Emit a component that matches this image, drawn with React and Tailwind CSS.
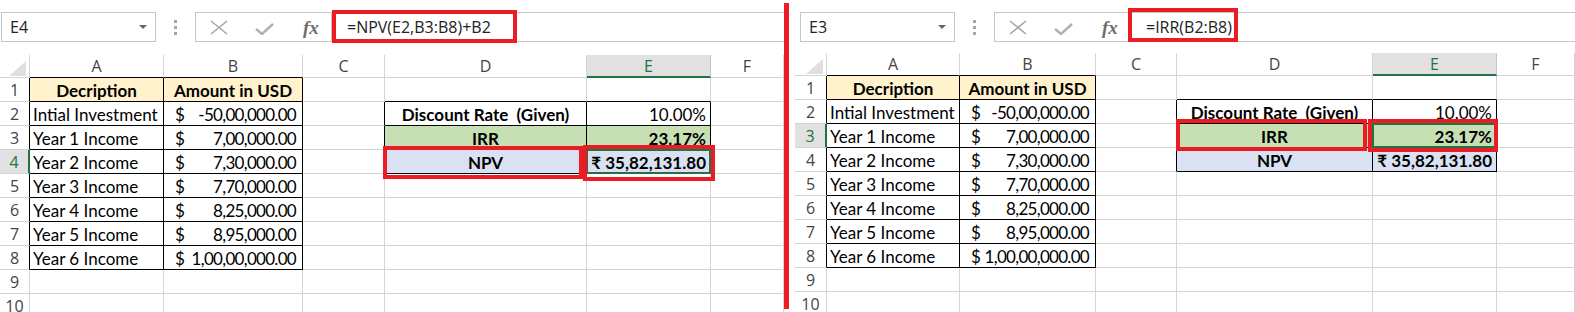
import React from "react";

const cellFont = { fontFamily: "Lato, 'Noto Sans', 'DejaVu Sans', sans-serif" };
const uiFont = { fontFamily: "'Open Sans', 'Noto Sans', sans-serif" };

const cells = {
  A1: { t: "Decription", b: true, align: "center", bg: "bg-[#fff2cc]" },
  B1: { t: "Amount in USD", b: true, align: "center", bg: "bg-[#fff2cc]" },
  A2: { t: "Intial Investment" },
  A3: { t: "Year 1 Income" },
  A4: { t: "Year 2 Income" },
  A5: { t: "Year 3 Income" },
  A6: { t: "Year 4 Income" },
  A7: { t: "Year 5 Income" },
  A8: { t: "Year 6 Income" },
  B2: { usd: "-50,00,000.00" },
  B3: { usd: "7,00,000.00" },
  B4: { usd: "7,30,000.00" },
  B5: { usd: "7,70,000.00" },
  B6: { usd: "8,25,000.00" },
  B7: { usd: "8,95,000.00" },
  B8: { usd: "1,00,00,000.00" },
  D2: { t: "Discount Rate  (Given)", b: true, align: "center" },
  E2: { t: "10.00%", align: "right" },
  D3: { t: "IRR", b: true, align: "center", bg: "bg-[#c6e0b4]" },
  E3: { t: "23.17%", b: true, align: "right", bg: "bg-[#c6e0b4]" },
  D4: { t: "NPV", b: true, align: "center", bg: "bg-[#d9e1f2]" },
  E4: { t: "₹ 35,82,131.80", b: true, align: "right", bg: "bg-[#d9e1f2]" },
};

const letters = ["", "A", "B", "C", "D", "E", "F"];

function inTable(r, c) {
  return (r >= 1 && r <= 8 && c >= 1 && c <= 2) || (r >= 2 && r <= 4 && c >= 4 && c <= 5);
}

function Cell({ r, c, selRow, selCol }) {
  const rb = inTable(r, c) || inTable(r, c + 1) ? "border-r-black" : "border-r-[#d4d4d4]";
  const bb = inTable(r, c) || inTable(r + 1, c) ? "border-b-black" : "border-b-[#d4d4d4]";

  if (c === 0) {
    const sel = r === selRow;
    return (
      <div
        className={`h-[24px] border-r border-b ${bb} ${
          sel ? "bg-[#e1e1e1] text-[#217346] border-r-2 border-r-[#217346]" : `text-[#444] ${rb}`
        } flex items-center justify-center text-[16px]`}
        style={uiFont}
      >
        {r}
      </div>
    );
  }

  const cell = cells[letters[c] + r];
  const bg = cell && cell.bg ? cell.bg : "bg-white";
  let content = null;
  if (cell && cell.usd) {
    content = (
      <div className="flex w-full justify-between pl-[11px] pr-[6px]">
        <span>$</span>
        <span className="tracking-[-0.7px]">{cell.usd}</span>
      </div>
    );
  } else if (cell) {
    const al =
      cell.align === "center" ? "justify-center" : cell.align === "right" ? "justify-end pr-[4px]" : "pl-[3px]";
    content = (
      <div className={`flex w-full whitespace-pre ${al} ${cell.b ? "font-bold" : ""}`}>{cell.t}</div>
    );
  }

  const selected = r === selRow && c === selCol;
  return (
    <div
      className={`relative h-[24px] border-r border-b ${rb} ${bb} ${bg} flex items-center pt-[1px] text-[17px] text-black leading-none`}
      style={cellFont}
    >
      {content}
      {selected && (
        <div className="absolute -left-px -top-px -right-px -bottom-px border-2 border-[#217346]" />
      )}
    </div>
  );
}

function HeaderCell({ c, selCol }) {
  if (c === 0) {
    return (
      <div className="relative h-[23px] border-r border-b border-[#d4d4d4]">
        <svg className="absolute right-[3px] bottom-[1px]" width="17" height="15" viewBox="0 0 17 15">
          <polygon points="17,0 17,15 0,15" fill="#dfdfdf" />
        </svg>
      </div>
    );
  }
  const sel = c === selCol;
  return (
    <div
      className={`h-[23px] border-r flex items-center justify-center text-[16px] ${
        sel
          ? "bg-[#e1e1e1] text-[#217346] border-r-[#c6c6c6] border-b-2 border-b-[#217346]"
          : `text-[#444] border-r-[#d4d4d4] border-b ${inTable(1, c) ? "border-b-black" : "border-b-[#d4d4d4]"}`
      }`}
      style={uiFont}
    >
      {letters[c]}
    </div>
  );
}

function FormulaBar({ name, formula, nameLeft }) {
  return (
    <div className="flex h-[30px] items-stretch" style={uiFont}>
      <div
        className={`${nameLeft} w-[155px] border border-[#c6c6c6] bg-white flex items-center justify-between pl-[8px] pr-[8px] text-[16px] text-[#222]`}
      >
        <span>{name}</span>
        <svg width="8" height="4" viewBox="0 0 8 4">
          <polygon points="0,0 8,0 4,4" fill="#666" />
        </svg>
      </div>
      <div className="w-[39px] flex flex-col items-center justify-center gap-[3px]">
        <div className="w-[3px] h-[3px] bg-[#a6a6a6]" />
        <div className="w-[3px] h-[3px] bg-[#a6a6a6]" />
        <div className="w-[3px] h-[3px] bg-[#a6a6a6]" />
      </div>
      <div className="w-[137px] border border-[#c6c6c6] bg-white flex items-center">
        <svg className="ml-[14px]" width="18" height="15" viewBox="0 0 18 15">
          <path d="M1 1 L17 14 M17 1 L1 14" stroke="#a6a6a6" strokeWidth="1.6" fill="none" />
        </svg>
        <svg className="ml-[27px] mt-[3px]" width="19" height="12" viewBox="0 0 19 12">
          <path d="M1 6 L7 11 L18 1" stroke="#b0b0b0" strokeWidth="2.4" fill="none" />
        </svg>
        <span
          className="ml-[29px] text-[19px] italic font-bold text-[#6e6e6e] leading-none"
          style={{ fontFamily: "'Liberation Serif', 'DejaVu Serif', serif" }}
        >
          fx
        </span>
      </div>
      <div className="flex-1 border-t border-b border-l border-[#c6c6c6] bg-white flex items-center pl-[14px] text-[16px] text-[#222]">
        {formula}
      </div>
    </div>
  );
}

function Sheet({ name, formula, cols, nameLeft, gap, selRow, selCol, boxes }) {
  const rows = [1, 2, 3, 4, 5, 6, 7, 8, 9, 10];
  const colIdx = [0, 1, 2, 3, 4, 5, 6];
  return (
    <div className="relative h-[312px] overflow-hidden pt-[12px]">
      <FormulaBar name={name} formula={formula} nameLeft={nameLeft} />
      <div className={`grid ${cols} ${gap}`}>
        {colIdx.map((c) => (
          <HeaderCell key={"h" + c} c={c} selCol={selCol} />
        ))}
        {rows.map((r) =>
          colIdx.map((c) => <Cell key={r + "-" + c} r={r} c={c} selRow={selRow} selCol={selCol} />)
        )}
      </div>
      {boxes.map((b, i) => (
        <div key={i} className={`absolute border-4 border-[#ec1c24] ${b}`} />
      ))}
    </div>
  );
}

export default function App() {
  return (
    <div className="w-[1575px] h-[312px] bg-white flex overflow-hidden">
      <div className="w-[784px] shrink-0">
        <Sheet
          name="E4"
          formula="=NPV(E2,B3:B8)+B2"
          cols="grid-cols-[30px_134px_139px_82px_202px_124px_1fr]"
          nameLeft="ml-[1px]"
          gap="mt-[13px]"
          selRow={4}
          selCol={5}
          boxes={[
            "left-[332px] top-[10px] w-[185px] h-[33px]",
            "left-[383px] top-[146px] w-[200px] h-[33px]",
            "left-[583px] top-[145px] w-[132px] h-[36px]",
          ]}
        />
      </div>
      <div className="w-[5px] shrink-0 mt-[3px] h-[306px] bg-[#ec1c24]" />
      <div className="w-[6px] shrink-0" />
      <div className="flex-1">
        <Sheet
          name="E3"
          formula="=IRR(B2:B8)"
          cols="grid-cols-[32px_133px_136px_81px_196px_124px_1fr]"
          nameLeft="ml-[5px]"
          gap="mt-[11px]"
          selRow={3}
          selCol={5}
          boxes={[
            "left-[333px] top-[8px] w-[110px] h-[34px]",
            "left-[381px] top-[119px] w-[191px] h-[32px]",
            "left-[573px] top-[119px] w-[130px] h-[33px]",
          ]}
        />
      </div>
    </div>
  );
}
